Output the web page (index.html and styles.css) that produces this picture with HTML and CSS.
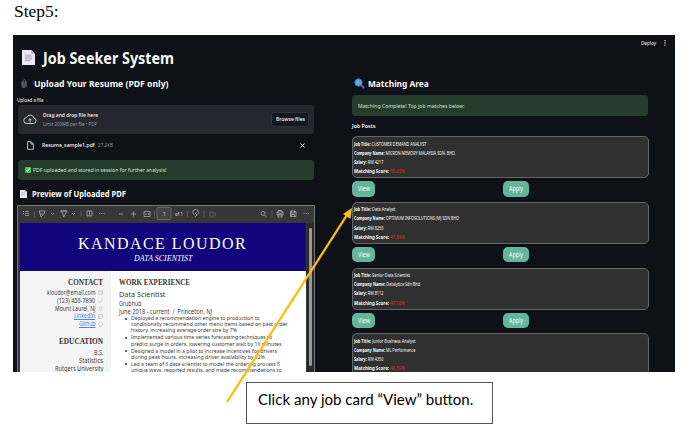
FILE: index.html
```html
<!DOCTYPE html>
<html lang="en">
<head>
<meta charset="utf-8">
<title>Job Seeker System</title>
<link rel="stylesheet" href="styles.css">
</head>
<body>
<p class="step"><span data-w="44.5">Step5:</span></p>
<main class="app">
  <section class="left">
    <h1><svg class="doc-big" viewBox="0 0 14 16"><path fill="#eee8f5" d="M0 0h10l4 4v12H0z"/><path fill="#b9aaca" d="M10 0v4h4z"/><path stroke="#a79bb6" d="M3 5.5h7M3 7.5h8M3 9.5h8M3 11.5h6"/></svg><span data-w="131">Job Seeker System</span></h1>
    <h2 class="upload-title"><svg class="clip" viewBox="0 0 8 12"><path fill="none" stroke="#85868a" stroke-width=".8" d="M2 3v5a2 2 0 0 0 4 0V2.500a1.500 1.500 0 0 0-3 0V8a1 1 0 0 0 2 0V4M1 4v5a3 2.500 0 0 0 6 0V3"/></svg><span data-w="134.5">Upload Your Resume (PDF only)</span></h2>
    <div class="label"><span data-w="26.5">Upload a file</span></div>
    <div class="drop">
      <svg class="cloud" viewBox="0 0 14 11"><path fill="none" stroke="#c9cad0" d="M4 9.500a3 3 0 0 1-.5-6A4 4 0 0 1 11 4a2.800 2.800 0 0 1-.5 5.500zM7 8.500V5M5.200 6.400L7 4.600l1.800 1.800"/></svg>
      <div class="drop-text"><div><span data-w="55">Drag and drop file here</span></div><div class="limit"><span data-w="53.7">Limit 200MB per file • PDF</span></div></div>
      <div class="browse"><span data-w="29">Browse files</span></div>
    </div>
    <div class="file">
      <svg class="sheet" viewBox="0 0 8 10"><path fill="none" stroke="#d7d8dc" d="M.7.6h4.100l2.500 2.500v6.300H.7zM4.600.8v2.500h2.600"/></svg>
      <span class="filename" data-w="52.7">Resume_sample1.pdf</span><div class="size"><span data-w="15">27.2KB</span></div>
      <svg class="close" viewBox="0 0 5 5"><path stroke="#eee" d="M.6.6l3.800 3.800M4.400.6L.6 4.400"/></svg>
    </div>
    <div class="success uploaded"><svg class="check" viewBox="0 0 6 6"><rect width="6" height="6" rx="1" fill="#47bd5b"/><path fill="none" stroke="#fff" d="M1.200 3l1.300 1.400 2.300-3"/></svg><span data-w="133.5">PDF uploaded and stored in session for further analysis!</span></div>
    <h3><svg class="doc-small" viewBox="0 0 14 16"><path fill="#eee8f5" d="M0 0h10l4 4v12H0z"/><path fill="#b9aaca" d="M10 0v4h4z"/><path stroke="#a79bb6" d="M3 5.500h7M3 8h8M3 10.500h8"/></svg><span data-w="94">Preview of Uploaded PDF</span></h3>
    <div class="pdf">
      <svg class="toolbar" viewBox="0 0 296 17" fill="none" stroke="#aaa" stroke-width=".8">
        <path d="M5 5.500h1m1 0h4M5 7.500h1m1 0h4M7 9.500h4M21 5h6l-1 3h-4zm1 3l1 3 2-2M33 7l1.500 1.500L36 7M43 5l2 3 .5 3 3.500-6zM42 5h7M54 7l1.500 1.500L57 7M69 5h5v5h-5zM71.500 5v5M81 7.500h1.200m1 0h1.200m1 0h1.200M101 8h4M113 8h5m-2.500-2.500v5M126 5.500h6v5h-6zM128.500 7l-1 1 1 1m1.500-2 1 1-1 1"/>
        <path stroke="#606060" d="M16.500 5v6M63 5v6M136.500 5v6M169.500 5v6M186 5v6M254 5v6M192 6h3v5h-3zm3 1h2.500v3H195"/>
        <path d="M176 8.500a2.800 2.800 0 1 1 3.500 0M177 7l2 2-2 2M246.500 9l2 2M259 6h6v3h-6zm1 0V4.500h4V6m-4 2h4v3h-4zM272.500 5h4.500l1 1v4.500h-5.500zm1 0v2h3V5m-3 5.500V8.500h3v2M285.500 7.500h1.200m1 0h1.200m1 0h1.200"/><circle cx="245" cy="7.500" r="2"/>
        <rect x="139" y="1.500" width="14" height="12" rx="1" stroke="#707070" fill="#444"/>
      </svg>
      <span class="page-number">1</span><span class="page-total" data-w="8">of 1</span>
      <div class="viewer">
        <div class="paper">
          <header><div class="name"><span data-w="169">KANDACE LOUDOR</span></div><div class="role"><span data-w="58.4">DATA SCIENTIST</span></div></header>
          <div class="resume">
            <aside>
              <h4><span data-w="35">CONTACT</span></h4>
              <p><span data-w="48.5">kloudor@email.com</span><svg viewBox="0 0 6 6"><path d="M.5 1h5v4h-5zM.5 2.500h5"/></svg></p>
              <p><span data-w="38">(123) 456-7890</span><svg viewBox="0 0 6 6"><path d="M5 .5v2L3 5H.5"/></svg></p>
              <p><span data-w="40.500">Mount Laurel, NJ</span><svg viewBox="0 0 6 6"><path d="M3 5.500L1.500 3a1.600 1.600 0 1 1 3 0z"/></svg></p>
              <p><span class="link" data-w="21">LinkedIn</span><svg viewBox="0 0 6 6"><path d="M.5.5h5v5h-5zm0 2h5M2 2.500v3"/></svg></p>
              <p><span class="link" data-w="16.5">Github</span><svg viewBox="0 0 6 6"><path d="M2 5.500V4.500A2.200 2.200 0 1 1 4 4.500v1"/></svg></p>
              <h4 class="education"><span data-w="44">EDUCATION</span></h4>
              <p class="edu"><span data-w="9.5">B.S.</span></p><p class="edu"><span data-w="24">Statistics</span></p><p class="edu"><span data-w="48.5">Rutgers University</span></p>
            </aside>
            <article>
              <h4><span data-w="71">WORK EXPERIENCE</span></h4>
              <div class="job"><span data-w="46.5">Data Scientist</span></div>
              <div class="org"><span data-w="22.5">Grubhub</span></div>
              <div class="date"><span data-w="93">June 2018 - current &nbsp;/&nbsp; Princeton, NJ</span></div>
              <ul>
                <li><div><span data-w="128.7">Deployed a recommendation engine to production to</span></div><div><span data-w="156.7">conditionally recommend other menu items based on past order</span></div><div><span data-w="106">history, increasing average order size by 7%</span></div></li>
                <li><div><span data-w="141">Implemented various time series forecasting techniques to</span></div><div><span data-w="150.5">predict surge in orders, lowering customer wait by 10 minutes</span></div></li>
                <li><div><span data-w="146">Designed a model in a pilot to increase incentives for drivers</span></div><div><span data-w="134">during peak hours, increasing driver availability by 22%</span></div></li>
                <li><div><span data-w="149">Led a team of 3 data scientist to model the ordering process 5</span></div><div><span data-w="150.5">unique ways, reported results, and made recommendations to</span></div></li>
              </ul>
            </article>
          </div>
        </div>
        <div class="scroll"><i></i></div>
      </div>
    </div>
  </section>
  <section class="right">
    <div class="top"><span data-w="15">Deploy</span><svg viewBox="0 0 2 6"><path fill="#ddd" d="M.4 0h1.200v1.200H.4zm0 2.300h1.200v1.200H.4zm0 2.300h1.200v1.200H.4z"/></svg></div>
    <h2 class="matching"><svg class="lens" viewBox="0 0 11 11"><path stroke="#7863a6" stroke-width="2" stroke-linecap="round" d="M7 7l2.500 2.500"/><circle cx="4.500" cy="4.500" r="3.700" fill="#59aaf0" stroke="#3974b4"/></svg><span data-w="60.7">Matching Area</span></h2>
    <div class="success complete"><span data-w="106.5">Matching Complete! Top job matches below:</span></div>
    <div class="posts"><span data-w="23.5">Job Posts</span></div>
    <div class="card"><p><span data-w="72.4"><b>Job Title:</b> CUSTOMER DEMAND ANALYST</span></p><p><span data-w="101.5"><b>Company Name:</b> MICRON MEMORY MALAYSIA SDN. BHD.</span></p><p><span data-w="29.4"><b>Salary:</b> RM 4217</span></p><p class="score"><span data-w="51"><b>Matching Score:</b> <em>55.23%</em></span></p></div>
    <div class="actions"><div class="view"><span data-w="12">View</span></div><div class="apply"><span data-w="14">Apply</span></div></div>
    <div class="card"><p><span data-w="41.2"><b>Job Title:</b> Data Analyst</span></p><p><span data-w="105"><b>Company Name:</b> OPTIMUM INFOSOLUTIONS (M) SDN BHD</span></p><p><span data-w="29.4"><b>Salary:</b> RM 8250</span></p><p class="score"><span data-w="51"><b>Matching Score:</b> <em>47.84%</em></span></p></div>
    <div class="actions"><div class="view"><span data-w="12">View</span></div><div class="apply"><span data-w="14">Apply</span></div></div>
    <div class="card"><p><span data-w="56"><b>Job Title:</b> Senior Data Scientist</span></p><p><span data-w="66"><b>Company Name:</b> Datalytica Sdn Bhd</span></p><p><span data-w="29.4"><b>Salary:</b> RM 8112</span></p><p class="score"><span data-w="51"><b>Matching Score:</b> <em>47.18%</em></span></p></div>
    <div class="actions"><div class="view"><span data-w="12">View</span></div><div class="apply"><span data-w="14">Apply</span></div></div>
    <div class="card"><p><span data-w="61.4"><b>Job Title:</b> Junior Business Analyst</span></p><p><span data-w="61.4"><b>Company Name:</b> ML Performance</span></p><p><span data-w="29.4"><b>Salary:</b> RM 4350</span></p><p class="score"><span data-w="51"><b>Matching Score:</b> <em>46.59%</em></span></p></div>
  </section>
</main>
<div class="callout"><span data-w="215.3">Click any job card “View” button.</span></div>
<svg class="arrow" viewBox="0 0 698 428"><path stroke="#ffc000" stroke-width="2.300" d="M227 402L347 215"/><path fill="#ffc000" d="M352 208l-1.500 11-7.500-5z"/></svg>
<script src="fit.js"></script>
</body>
</html>
```
FILE: fit.js
```js
// Condense each label to its measure, keeping its line height.
document.querySelectorAll('[data-w]').forEach(function (el) {
  var target = parseFloat(el.dataset.w);
  var natural = el.getBoundingClientRect().width;
  el.style.transform = 'scaleX(' + target / natural + ')';
  el.style.marginRight = (target - natural) + 'px';
});
```
FILE: styles.css
```css
* { box-sizing: border-box; }
body { margin: 0; width: 698px; height: 428px; overflow: hidden; position: relative; background: #fff; font-family: "Noto Sans", sans-serif; }
h1, h2, h3, h4, p, ul { margin: 0; padding: 0; }
span { white-space: nowrap; }
[data-w] { display: inline-block; flex: none; transform-origin: 0 50%; }
svg { flex: none; }
.step { height: 35px; padding: 2px 0 0 14px; font: 16.500px/20px "Liberation Serif", serif; }
.app { display: flex; width: 652px; width: 662px; height: 337px; margin-left: 13px; background: #0e1117; color: #fafafa; overflow: hidden; }
.left { width: 302px; padding-left: 4px; flex: none; }
.right { width: 323px; margin-left: 37px; flex: none; }
h1 { display: flex; align-items: center; height: 29px; margin-top: 8px; padding-left: 5px; font-size: 15.500px; }
.doc-big { width: 13px; height: 15px; margin-right: 8px; }
h2 { display: flex; align-items: center; height: 16px; font-size: 9.600px; }
.upload-title { margin-top: 3px; padding-left: 4px; }
.clip { width: 6px; height: 11px; margin-right: 7px; }
.label { height: 13px; padding-top: 3px; font-size: 5px; line-height: 12px; }
.drop { display: flex; align-items: center; width: 296px; height: 29px; margin: 1px 0 0 1px; padding: 0 5px; background: #262730; border-radius: 3px; }
.cloud { width: 14px; height: 11px; }
.drop-text { margin-left: 5.500px; font-size: 6px; line-height: 9px; font-weight: 500; }
.drop-text div { height: 9px; }
.drop-text .limit { font-size: 5.400px; color: #9a9ba2; font-weight: 400; }
.browse { width: 38px; height: 15px; padding-left: 3.500px; margin-left: auto; border: 1px solid #30323a; border-radius: 3px; background: #131720; font-size: 5.800px; line-height: 13px; font-weight: 500; }
.file { display: flex; align-items: center; height: 22px; padding-left: 10px; font-size: 6px; }
.sheet { width: 7px; height: 9px; margin-right: 8px; }
.filename { font-weight: 500; }
.size { margin-left: 3px; font-size: 5px; color: #8e9096; }
.close { width: 5px; height: 5px; margin-left: auto; margin-right: 10px; }
.success { display: flex; align-items: center; width: 296px; height: 20px; border-radius: 3px; background: #253b2b; color: #c8ecd0; font-size: 6px; }
.uploaded { margin: 4px 0 0 1px; padding-left: 6.500px; }
.check { width: 6px; height: 6px; margin-right: 2px; }
h3 { display: flex; align-items: center; height: 25px; padding: 2px 0 0 3px; font-size: 8.500px; }
.doc-small { width: 7px; height: 8px; margin-right: 4.500px; }
.pdf { position: relative; width: 298px; height: 180px; border: 1px solid #777; background: #373737; }
.toolbar { display: block; width: 296px; height: 17px; }
.page-number, .page-total { position: absolute; top: 2.500px; font-size: 5px; line-height: 10px; color: #ddd; }
.page-number { left: 145px; }
.page-total { left: 157px; }
.viewer { display: flex; height: 160px; padding-left: 2px; }
.paper { width: 286px; background: #fff; overflow: hidden; flex: none; }
.paper header { height: 48px; padding-top: 9px; background: #11057b; color: #fff; font-family: "Liberation Serif", serif; }
.name { height: 22px; padding-left: 58px; font-size: 17.500px; line-height: 22px; letter-spacing: 1.600px; }
.role { height: 10px; padding-left: 114px; font-size: 8px; line-height: 10px; font-style: italic; }
.resume { display: flex; }
aside { width: 91px; height: 112px; padding: 7px 8px 0 0; background: #f4f4f4; color: #444; }
h4 { height: 10px; font: bold 8px/10px "Liberation Serif", serif; color: #333; }
aside h4, aside p { display: flex; justify-content: flex-end; align-items: center; }
aside p { height: 7.800px; font-size: 6.200px; line-height: 7.800px; }
aside h4 + p { margin-top: 1px; }
aside svg { width: 5px; height: 5px; margin-left: 3px; fill: none; stroke: #bbb; stroke-width: .7; }
.link { color: #4385ef; text-decoration: underline; }
aside .education { margin-top: 9.500px; }
aside p.edu { height: 8px; }
article { width: 195px; padding: 7px 0 0 8px; color: #3c3c3c; }
.job { height: 12px; font-size: 7.700px; line-height: 12px; }
.org { height: 7.500px; font-size: 6.200px; line-height: 8px; }
.date { height: 7.500px; font-size: 6.200px; line-height: 8px; }
ul { list-style: none; padding-left: 12px; font-size: 5.700px; line-height: 6.200px; }
li { position: relative; margin-bottom: .8px; }
li div { height: 6.200px; }
li::before { content: ""; position: absolute; left: -6px; top: 2.500px; width: 2px; height: 2px; border-radius: 1px; background: #333; }
.scroll { width: 7px; margin-left: 1px; background: #292929; padding: 5px 2px; }
.scroll i { display: block; width: 3px; height: 138px; background: #999; border-radius: 1px; }
.top { display: flex; align-items: center; height: 16px; padding-left: 289px; font-size: 5.300px; }
.top svg { width: 2px; height: 6px; margin-left: 8px; }
.matching { margin-top: 24px; padding-left: 2px; }
.lens { width: 11px; height: 11px; margin-right: 3px; }
.complete { height: 21px; margin-top: 4px; padding-left: 6px; }
.posts { height: 20px; font-size: 5.500px; line-height: 20px; font-weight: 600; }
.card { width: 297px; height: 42px; padding: 2.500px 0 0 1.300px; border: 1px solid #666; border-radius: 5px; background: #303030; }
.card p { height: 9.200px; font-size: 4.800px; line-height: 9.200px; }
.card .score { font-size: 5.200px; }
.card b { font-weight: 700; }
.card em { color: #df3434; font-style: normal; }
.actions { display: flex; height: 23.800px; padding-top: 3px; }
.actions > div { height: 15.500px; border-radius: 5px; background: #62b79b; font-size: 6.200px; line-height: 15px; }
.view { width: 23px; padding-left: 5.500px; }
.apply { width: 26px; margin-left: 128px; padding-left: 6px; }
.callout { position: absolute; left: 246px; top: 382px; width: 247px; height: 42px; padding: 4px 0 0 11px; border: 1px solid #555; background: #fff; font: 15px/25px "Lato", sans-serif; color: #000; }
.arrow { position: absolute; left: 0; top: 0; width: 698px; height: 428px; }
```
